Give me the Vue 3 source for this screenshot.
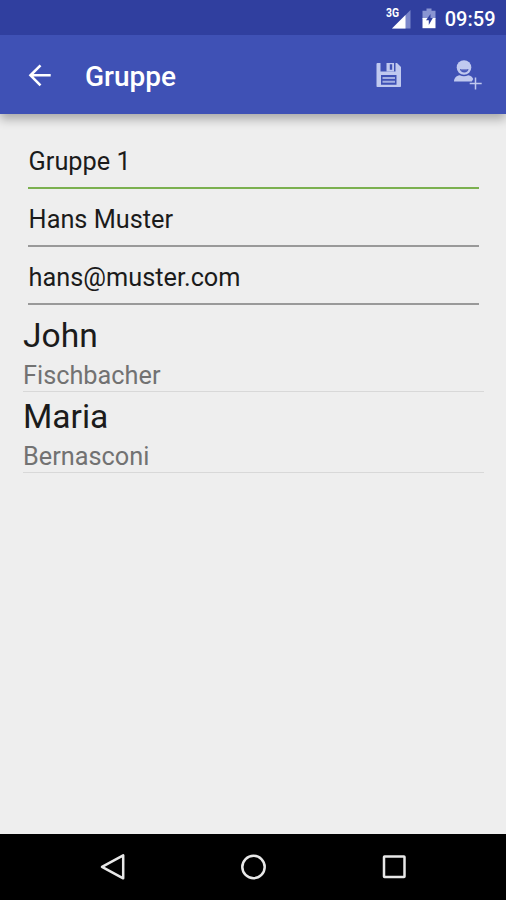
<script setup>
import { ref } from 'vue'

const fields = ref([
  { id: 'group', value: 'Gruppe 1', active: true },
  { id: 'owner', value: 'Hans Muster', active: false },
  { id: 'email', value: 'hans@muster.com', active: false },
])

const members = ref([
  { first: 'John', last: 'Fischbacher' },
  { first: 'Maria', last: 'Bernasconi' },
])
</script>

<template>
  <div class="screen">
    <div class="status">
      <svg class="signal" width="28" height="24" viewBox="0 0 28 24">
        <path d="M25.5 3V21.5H7z" fill="#7b87cb" />
        <path d="M20.5 8V21.5H7z" fill="#fff" />
        <text x="1" y="10.3" class="network" textLength="13" lengthAdjust="spacingAndGlyphs">3G</text>
      </svg>
      <svg class="battery" width="14" height="22" viewBox="0 0 14 22">
        <path d="M4.5 0.5h5v2.3h4V11H.5V2.800h4z" fill="#8a95d2" />
        <path d="M.5 10h13v10.200H.5z" fill="#fff" />
        <path d="M8.500 6 4 12.300h2.800v4.700l4-7H8.500z" fill="#303f9f" />
      </svg>
      <span class="clock">09:59</span>
    </div>

    <header class="toolbar">
      <svg class="back" width="24" height="24" viewBox="0 0 24 24">
        <path d="M23.700 12.300H3.500M13.500 2.300 3.500 12.300l10 10" fill="none" stroke="#fff" stroke-width="2.600" />
      </svg>
      <h1>Gruppe</h1>
      <svg class="save" width="26" height="26" viewBox="0 0 26 26">
        <path
          fill="#c0c9ef"
          fill-rule="evenodd"
          d="M1.500 1H4.500v8.500h15V1h1.500L25 4.900V24.200a.8.8 0 0 1-.8.8H1.300a.8.8 0 0 1-.8-.8V2a1 1 0 0 1 1-1zM5 13v9.800h15.500V13z"
        />
        <path fill="#c0c9ef" fill-rule="evenodd" d="M10.500 1h7.500v8.500h-7.500zM13.800 2.300v5.500h2.400V2.300z" />
        <path d="M6.500 15.900h12.500M6.500 19.800h12.500" stroke="#a3afe2" stroke-width="2" />
      </svg>
      <svg class="add" width="30" height="32" viewBox="0 0 30 32">
        <circle cx="11" cy="8.500" r="7.300" fill="#c0c9ef" />
        <path d="M7 10h8.500c-.3 2.200-1.800 3.500-4.200 3.500S7.200 12.200 7 10z" fill="#4758b9" />
        <path d="M8 10.200h6.500v1H8z" fill="#8792d3" />
        <path d="M1 22.500c0-3.500 2.300-5.700 5.700-6.300 2.800 1.500 5.800 1.500 8.600 0 2.500.5 4.200 1.800 5 3.800l-1.500 2.500z" fill="#c0c9ef" />
        <path d="M22.500 18.500v12M16.700 24.500h12" stroke="#c0c9ef" stroke-width="1.500" />
      </svg>
    </header>

    <main class="content">
      <div class="form">
        <div v-for="f in fields" :key="f.id" class="field" :class="{ active: f.active }">{{ f.value }}</div>
      </div>
      <ul class="members">
        <li v-for="m in members" :key="m.first">
          <div class="first">{{ m.first }}</div>
          <div class="last">{{ m.last }}</div>
        </li>
      </ul>
    </main>

    <nav class="navbar">
      <svg width="30" height="30" viewBox="0 0 30 30">
        <path d="M26.200 3.300v23L5 14.800z" />
      </svg>
      <svg width="30" height="30" viewBox="0 0 30 30">
        <circle cx="15.500" cy="15" r="11.200" />
      </svg>
      <svg width="30" height="30" viewBox="0 0 30 30">
        <rect x="5" y="4.500" width="20.500" height="20.500" rx=".5" />
      </svg>
    </nav>
  </div>
</template>

<style>
body {
  margin: 0;
}
</style>

<style scoped>
.screen {
  display: flex;
  flex-direction: column;
  width: 506px;
  height: 900px;
  overflow: hidden;
  background: #eee;
  font-family: Roboto, sans-serif;
  color: #1b1b1b;
}

.status {
  position: relative;
  z-index: 1;
  display: flex;
  align-items: center;
  justify-content: flex-end;
  box-sizing: border-box;
  height: 35px;
  flex: none;
  padding: 3px 10.5px 0 0;
  background: #303f9f;
}

.signal {
  margin: 0 9px 0 0;
}

.network {
  font-size: 12px;
  font-weight: 700;
  fill: #fff;
}

.clock {
  margin-left: 8.500px;
  font-size: 20px;
  font-weight: 500;
  line-height: 32px;
  color: #fff;
}

.toolbar {
  display: flex;
  align-items: center;
  box-sizing: border-box;
  height: 79px;
  flex: none;
  padding: 0 23px 0 27px;
  background: #3f51b5;
  box-shadow: 0 5px 10px rgba(0, 0, 0, 0.3);
}

.toolbar h1 {
  flex: 1;
  margin: 4px 0 0 34px;
  font-size: 28px;
  font-weight: 500;
  line-height: 36px;
  color: #fff;
}

.add {
  margin-left: 51px;
}

.content {
  flex: 1;
  padding-top: 17px;
}

.form {
  padding: 0 27px 0 28px;
}

.field {
  box-sizing: border-box;
  height: 58px;
  padding: 5px 0 0 0.6px;
  border-bottom: 2px solid #999;
  font-size: 25.3px;
  line-height: 51px;
}

.field.active {
  border-bottom-color: #7bb04f;
}

.members {
  margin: 0;
  padding: 6px 22px 0 23px;
  list-style: none;
}

.members li {
  box-sizing: border-box;
  height: 81px;
  border-bottom: 1px solid #d8d8d8;
}

.first {
  padding-top: 1px;
  font-size: 33.6px;
  line-height: 48px;
}

.last {
  font-size: 25.3px;
  line-height: 32px;
  color: #727272;
}

.navbar {
  display: flex;
  align-items: center;
  justify-content: center;
  gap: 111px;
  height: 66px;
  flex: none;
  background: #000;
}

.navbar svg {
  fill: none;
  stroke: #e8e8e8;
  stroke-width: 2.5;
  stroke-linejoin: round;
}
</style>
